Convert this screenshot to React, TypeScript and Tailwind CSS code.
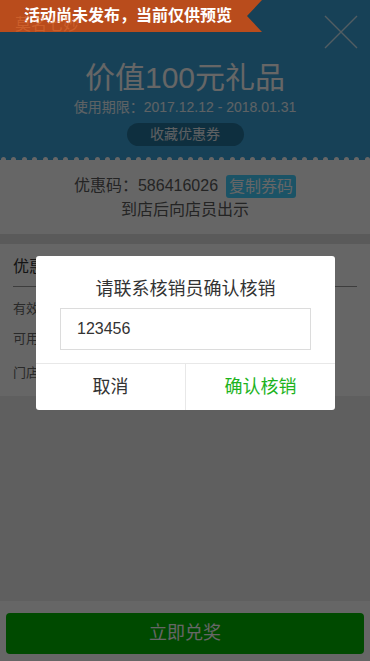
import React from 'react';

const FONT = { fontFamily: '"Liberation Sans", "Noto Sans CJK SC", sans-serif' };

function Scallops() {
  return (
    <div className="flex h-[3px] items-start gap-[5.4px] overflow-hidden pl-[1px]">
      {Array.from({ length: 36 }).map((_, i) => (
        <span key={i} className="block h-[5px] w-[5px] shrink-0 rounded-full bg-white" />
      ))}
    </div>
  );
}

export default function App() {
  return (
    <div className="relative flex h-[661px] w-full flex-col overflow-hidden bg-[#eeeeee]" style={FONT}>
      {/* ── Header ── */}
      <div className="flex h-[160px] flex-col bg-[#3aa3da]">
        <div className="flex items-start justify-between px-[15px] pt-[15px]">
          <span className="text-[16px] leading-[20px] text-white">莫名七妙</span>
          <svg width="34" height="34" viewBox="0 0 34 34" className="mr-[-3px]">
            <path d="M1 1 L33 33 M33 1 L1 33" stroke="rgba(255,255,255,0.75)" strokeWidth="1.4" />
          </svg>
        </div>
        <div className="mt-[12px] text-center text-[30px] leading-[34px] text-white">价值100元礼品</div>
        <div className="mt-[3px] text-center text-[14px] leading-[18px] text-white/90">使用期限：2017.12.12 - 2018.01.31</div>
        <div className="mt-[7px] flex justify-center">
          <span className="flex h-[23px] w-[117px] items-center justify-center rounded-full bg-[#25759d] text-[14px] text-white/90">收藏优惠券</span>
        </div>
        <div className="flex-1" />
        <Scallops />
      </div>

      {/* ── Code ── */}
      <div className="flex flex-col items-center bg-white pt-[14px] pb-[12px] text-[16px] text-[#5a5a5a]">
        <div className="flex items-center leading-[24px]">
          <span>优惠码：586416026</span>
          <span className="ml-[8px] rounded-[3px] bg-[#44d0ff] px-[3px] text-[16px] leading-[23px] text-white">复制券码</span>
        </div>
        <div className="leading-[24px]">到店后向店员出示</div>
      </div>

      <div className="h-[10px] bg-[#e2e2e2]" />

      {/* ── Detail ── */}
      <div className="bg-white px-[13px] pb-[14px]">
        <div className="border-b border-[#999999] pt-[13px] pb-[9px] text-[16px] leading-[20px] text-[#333]">优惠券详情</div>
        <div className="flex flex-col gap-[12px] pt-[13px] text-[13px] leading-[18px] text-[#666]">
          <div>有效期：2017.12.12 - 2018.01.31</div>
          <div>可用时间：周一至周日全天可用</div>
          <div className="pt-[4px]">门店：莫名七妙旗舰店</div>
        </div>
      </div>

      <div className="flex-1" />

      {/* ── Footer ── */}
      <div className="bg-white px-[6px] pt-[12px] pb-[7px]">
        <div className="flex h-[41px] items-center justify-center rounded-[4px] bg-[#00b900] text-[18px] text-white">立即兑奖</div>
      </div>

      {/* ── Mask ── */}
      <div className="absolute inset-0 bg-black/60" />

      {/* ── Ribbon ── */}
      <div
        className="absolute top-0 left-0 flex h-[32px] w-[262px] items-center bg-[#b94c1c] pl-[24px] text-[16px] font-bold text-white"
        style={{ clipPath: 'polygon(0 0, 100% 0, 247px 16px, 100% 100%, 0 100%)' }}
      >
        活动尚未发布，当前仅供预览
      </div>
      <span className="absolute top-[15px] left-[15px] text-[16px] leading-[20px] text-[rgba(230,120,60,0.45)]">莫名七妙</span>

      {/* ── Dialog ── */}
      <div className="absolute top-[256px] left-[36px] w-[299px] overflow-hidden rounded-[3px] bg-white">
        <div className="pt-[21px] text-center text-[18px] leading-[24px] text-[#333]">请联系核销员确认核销</div>
        <div className="mx-[24px] mt-[7px] flex h-[42px] items-center border border-[#dcdcdc] px-[16px] text-[16px] text-[#333]">123456</div>
        <div className="mt-[13px] flex h-[47px] border-t border-[#e8e8e8] text-[18px]">
          <div className="flex flex-1 items-center justify-center border-r border-[#e8e8e8] text-[#333]">取消</div>
          <div className="flex flex-1 items-center justify-center text-[#1db31d]">确认核销</div>
        </div>
      </div>
    </div>
  );
}
